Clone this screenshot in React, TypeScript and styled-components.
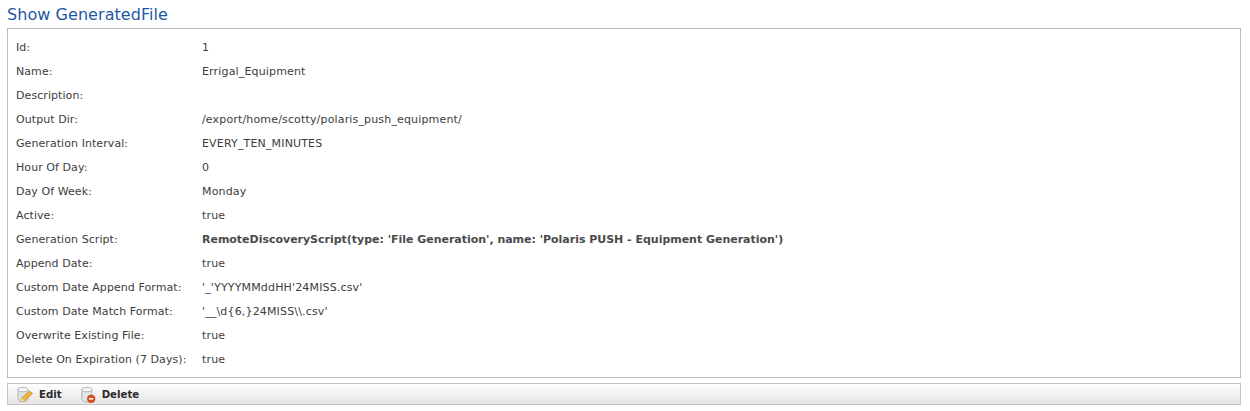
import React from 'react';
import styled, { createGlobalStyle } from 'styled-components';

const GlobalStyle = createGlobalStyle`
    html, body {
        margin: 0;
        padding: 0;
        background: #fff;
    }
`;

const Page = styled.div`
    width: 1250px;
    height: 411px;
    padding: 0 9px 0 7px;
    box-sizing: border-box;
    overflow: hidden;
    font-family: 'DejaVu Sans', Verdana, sans-serif;
    font-size: 11px;
    color: #3d3d3d;
`;

const Title = styled.h1`
    margin: 0;
    height: 28px;
    font-size: 16px;
    line-height: 30px;
    font-weight: normal;
    letter-spacing: 0.06px;
    color: #1d57a3;
`;

const Panel = styled.div`
    border: 1px solid #bbb;
    height: 350px;
    box-sizing: border-box;
    padding: 7px 8px;
`;

const Row = styled.div`
    display: flex;
    height: 24px;
    line-height: 24px;
`;

const Label = styled.div`
    width: 186px;
    flex: none;
    letter-spacing: 0.07px;
`;

const Value = styled.div<{ $bold?: boolean }>`
    font-weight: ${(p) => (p.$bold ? 'bold' : 'normal')};
    letter-spacing: ${(p) => (p.$bold ? '-0.02px' : '0.16px')};
    color: ${(p) => (p.$bold ? '#4a4a4a' : '#3d3d3d')};
`;

const Toolbar = styled.div`
    display: flex;
    align-items: center;
    gap: 19px;
    height: 22px;
    margin-top: 5px;
    padding-left: 9px;
    box-sizing: border-box;
    border: 1px solid #c4c4c4;
    background: linear-gradient(#fff, #e4e4e4);
`;

const ToolButton = styled.a`
    display: flex;
    align-items: center;
    gap: 5px;
    font-size: 10.2px;
    font-weight: bold;
    color: #2a2a2a;
`;

const Icon = styled.svg<{ $width: number }>`
    width: ${(p) => p.$width}px;
    height: 17px;
    flex: none;
`;

const EditIcon = () => (
    <Icon $width={17} viewBox="0 0 17 17">
        <path d="M1 3.5v9.5C1 14.6 3.2 15.5 6 15.5s5-.9 5-2.5V3.5z" fill="#dde1e3" stroke="#a4aaae" strokeWidth="0.8" />
        <ellipse cx="6" cy="3.6" rx="5" ry="2.2" fill="#f4f5f6" stroke="#a4aaae" strokeWidth="0.8" />
        <path d="M3.6 15.8l.9-3.6L12.8 5 15.6 7.6 7.2 14.8z" fill="#f2b632" stroke="#c08422" strokeWidth="0.7" />
        <path d="M3.6 15.8l.9-3.6 2.7 2.6z" fill="#f6e0b5" />
    </Icon>
);

const DeleteIcon = () => (
    <Icon $width={16} viewBox="0 0 16 17">
        <path d="M.8 3.5v10C.8 15 3 16 5.8 16s5-1 5-2.5v-10z" fill="#e2e5e8" stroke="#a4aaae" strokeWidth="0.8" />
        <ellipse cx="5.8" cy="3.6" rx="5" ry="2.2" fill="#f5f6f7" stroke="#a4aaae" strokeWidth="0.8" />
        <circle cx="10.2" cy="12.8" r="3.9" fill="#dc4f1d" stroke="#b23a10" strokeWidth="0.5" />
        <rect x="8" y="12" width="4.4" height="1.6" fill="#fff" />
    </Icon>
);

const fields: { label: string; value: string; bold?: boolean }[] = [
    { label: 'Id:', value: '1' },
    { label: 'Name:', value: 'Errigal_Equipment' },
    { label: 'Description:', value: '' },
    { label: 'Output Dir:', value: '/export/home/scotty/polaris_push_equipment/' },
    { label: 'Generation Interval:', value: 'EVERY_TEN_MINUTES' },
    { label: 'Hour Of Day:', value: '0' },
    { label: 'Day Of Week:', value: 'Monday' },
    { label: 'Active:', value: 'true' },
    {
        label: 'Generation Script:',
        value: "RemoteDiscoveryScript(type: 'File Generation', name: 'Polaris PUSH - Equipment Generation')",
        bold: true,
    },
    { label: 'Append Date:', value: 'true' },
    { label: 'Custom Date Append Format:', value: "'_'YYYYMMddHH'24MISS.csv'" },
    { label: 'Custom Date Match Format:', value: "'__\\d{6,}24MISS\\\\.csv'" },
    { label: 'Overwrite Existing File:', value: 'true' },
    { label: 'Delete On Expiration (7 Days):', value: 'true' },
];

const App: React.FC = () => (
    <Page>
        <GlobalStyle />
        <Title>Show GeneratedFile</Title>
        <Panel>
            {fields.map((f) => (
                <Row key={f.label}>
                    <Label>{f.label}</Label>
                    <Value $bold={f.bold}>{f.value}</Value>
                </Row>
            ))}
        </Panel>
        <Toolbar>
            <ToolButton>
                <EditIcon />
                Edit
            </ToolButton>
            <ToolButton>
                <DeleteIcon />
                Delete
            </ToolButton>
        </Toolbar>
    </Page>
);

export default App;
